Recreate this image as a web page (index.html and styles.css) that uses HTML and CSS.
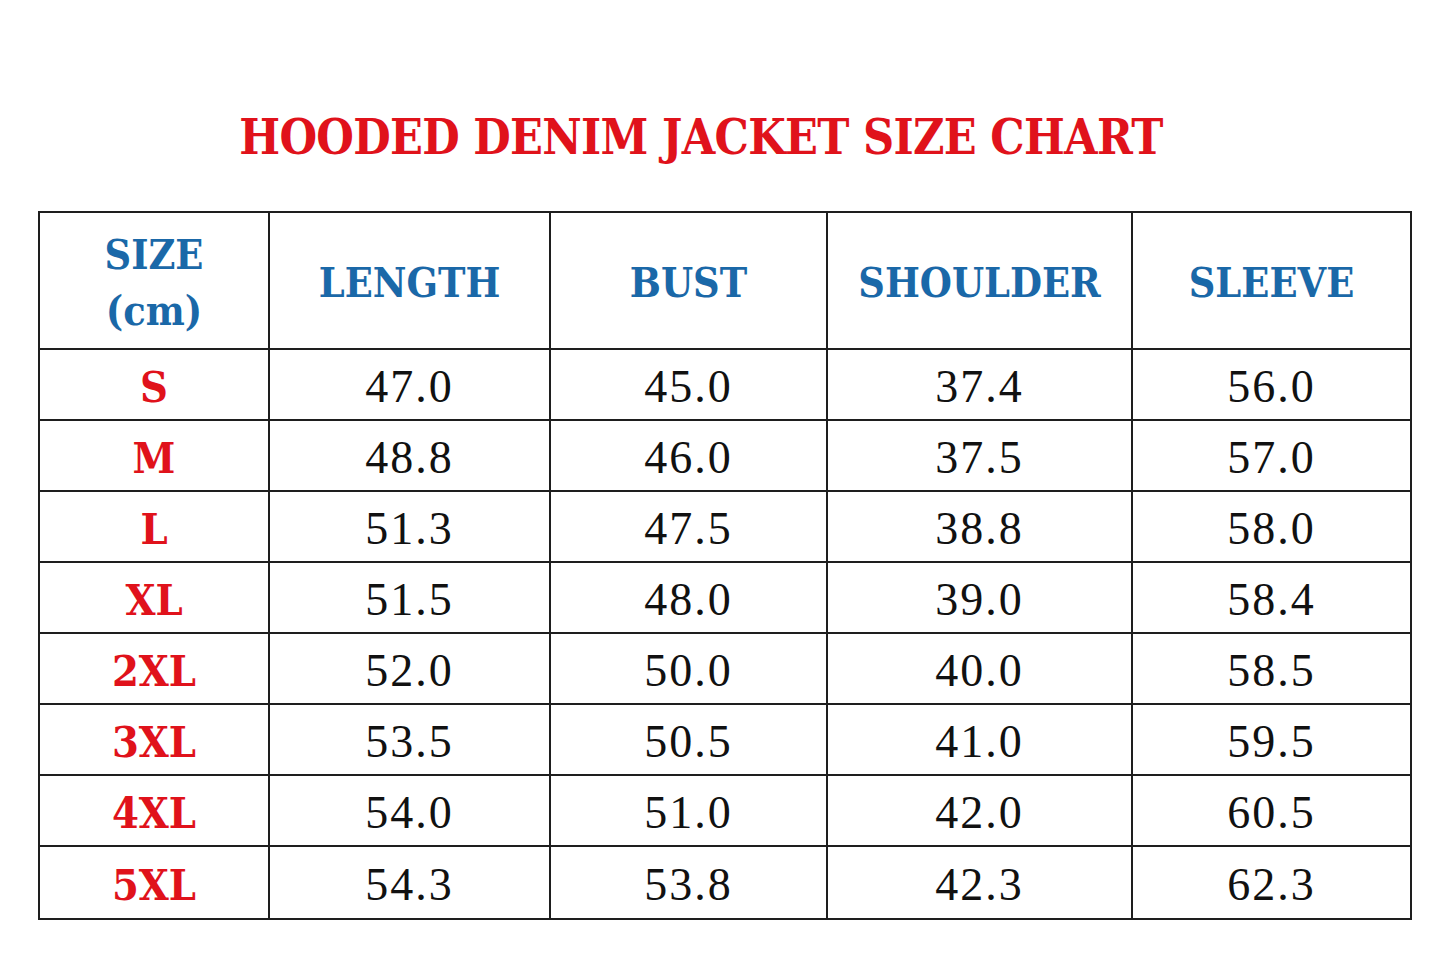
FILE: index.html
```html
<!DOCTYPE html>
<html lang="en">
<head>
<meta charset="utf-8">
<title>Hooded Denim Jacket Size Chart</title>
<link rel="stylesheet" href="styles.css">
</head>
<body>
<main class="page">
  <h1 class="title">HOODED DENIM JACKET SIZE CHART</h1>
  <table class="chart">
    <colgroup>
      <col class="c1"><col class="c2"><col class="c3"><col class="c4"><col class="c5">
    </colgroup>
    <thead>
      <tr>
        <th>SIZE<br>(cm)</th>
        <th>LENGTH</th>
        <th>BUST</th>
        <th>SHOULDER</th>
        <th>SLEEVE</th>
      </tr>
    </thead>
    <tbody>
      <tr><td class="size">S</td><td>47.0</td><td>45.0</td><td>37.4</td><td>56.0</td></tr>
      <tr><td class="size">M</td><td>48.8</td><td>46.0</td><td>37.5</td><td>57.0</td></tr>
      <tr><td class="size">L</td><td>51.3</td><td>47.5</td><td>38.8</td><td>58.0</td></tr>
      <tr><td class="size">XL</td><td>51.5</td><td>48.0</td><td>39.0</td><td>58.4</td></tr>
      <tr><td class="size">2XL</td><td>52.0</td><td>50.0</td><td>40.0</td><td>58.5</td></tr>
      <tr><td class="size">3XL</td><td>53.5</td><td>50.5</td><td>41.0</td><td>59.5</td></tr>
      <tr><td class="size">4XL</td><td>54.0</td><td>51.0</td><td>42.0</td><td>60.5</td></tr>
      <tr class="last"><td class="size">5XL</td><td>54.3</td><td>53.8</td><td>42.3</td><td>62.3</td></tr>
    </tbody>
  </table>
</main>
</body>
</html>
```
FILE: styles.css
```css
html, body {
  margin: 0;
  padding: 0;
  background: #ffffff;
}

.page {
  width: 1445px;
  height: 960px;
  box-sizing: border-box;
  padding: 0 0 0 38px;
  font-family: "Liberation Serif", "DejaVu Serif", serif;
}

.title {
  margin: 0;
  box-sizing: border-box;
  height: 211px;
  padding: 107px 46px 0 0;
  width: 1372px;
  text-align: center;
  color: #e0121b;
  font-family: "DejaVu Serif", serif;
  font-stretch: condensed;
  font-size: 48px;
  font-weight: 700;
  line-height: 60px;
  letter-spacing: -0.7px;
}

.chart {
  border-collapse: collapse;
  width: 1372px;
  table-layout: fixed;
  border: 2px solid #1e1e1e;
}

.c1 { width: 230px; }
.c2 { width: 281px; }
.c3 { width: 277px; }
.c4 { width: 305px; }
.c5 { width: 279px; }

.chart th,
.chart td {
  border: 2px solid #1e1e1e;
  text-align: center;
  padding: 0;
}

.chart th {
  height: 137px;
  padding-top: 5px;
  box-sizing: border-box;
  color: #1a68a8;
  font-family: "DejaVu Serif", serif;
  font-stretch: condensed;
  font-size: 41px;
  font-weight: 700;
  line-height: 56px;
  letter-spacing: 0;
}

.chart td {
  height: 65px;
  color: #111111;
  font-size: 46px;
  letter-spacing: 2px;
  padding-top: 4px;
}

.chart .last td {
  height: 67px;
}

.chart td.size {
  color: #e0121b;
  font-family: "DejaVu Serif", serif;
  font-stretch: condensed;
  font-size: 43px;
  font-weight: 700;
  letter-spacing: 0;
}
```
